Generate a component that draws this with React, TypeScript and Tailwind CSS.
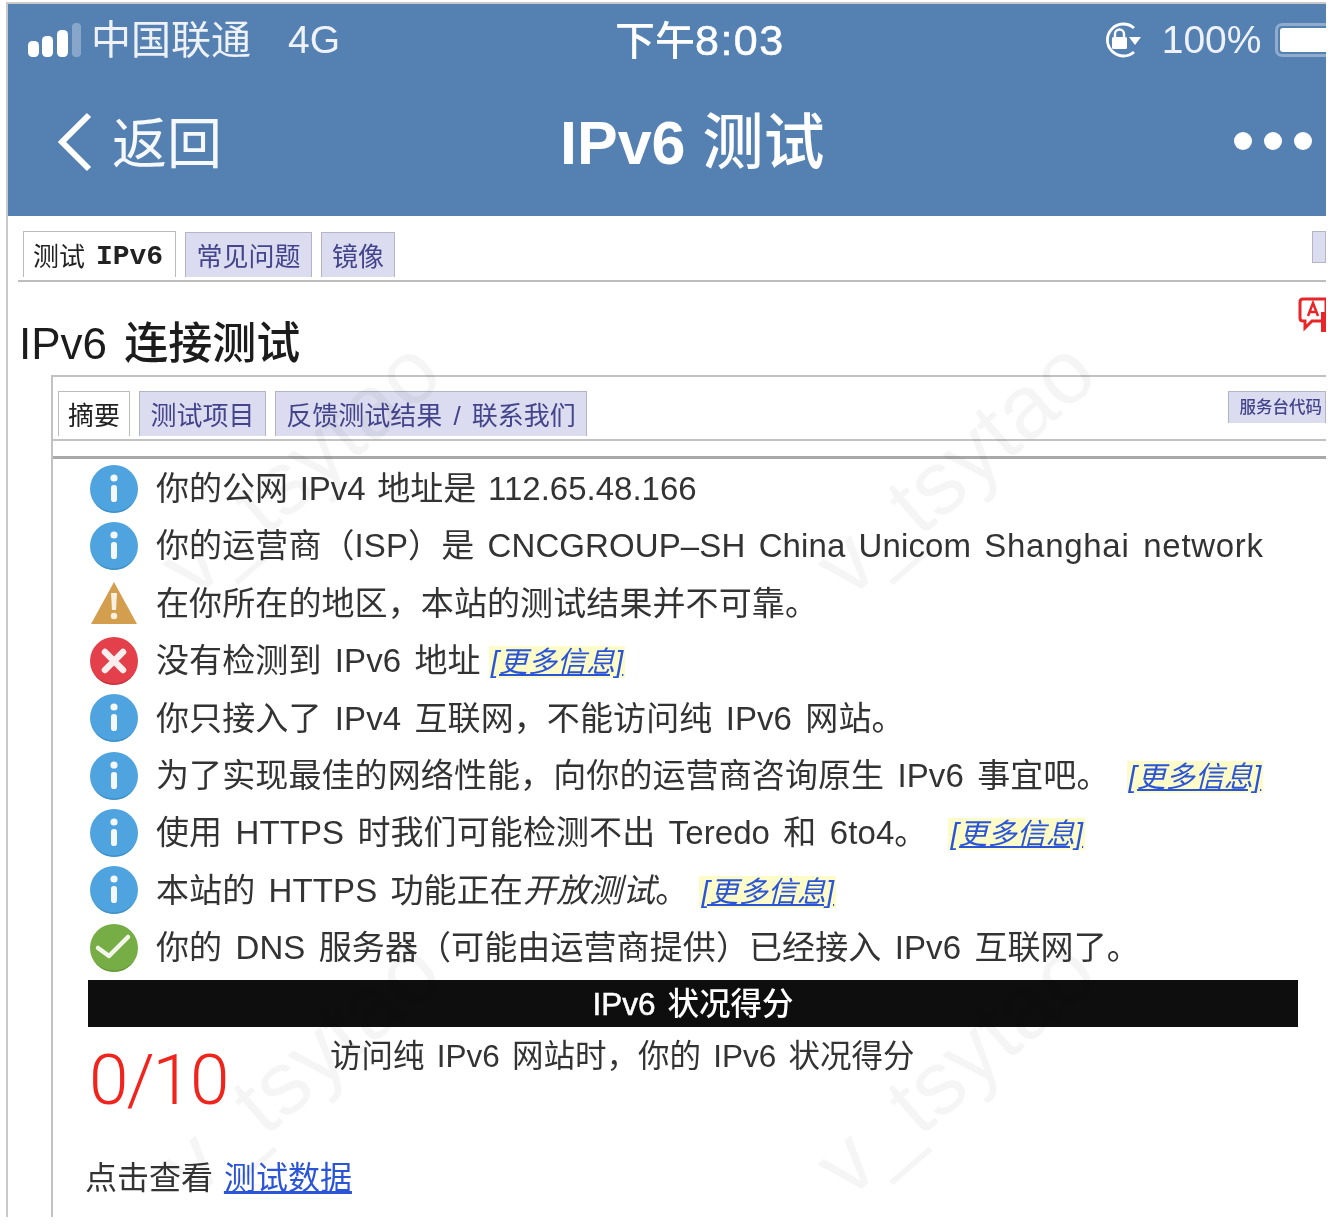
import type { ReactNode } from "react";

type Kind = "info" | "warn" | "error" | "ok";

function InfoIcon() {
  return (
    <svg width="48" height="50" viewBox="0 0 48 50">
      <circle cx="24" cy="25" r="24" fill="#4fa3de" />
      <path d="M4 38 A24 24 0 0 0 44 38 A26 26 0 0 1 4 38 Z" fill="#3f8fc8" />
      <circle cx="24" cy="14" r="3.600" fill="#f4f8fb" />
      <rect x="21" y="21" width="6" height="17" rx="2.800" fill="#f4f8fb" />
    </svg>
  );
}

function WarnIcon() {
  return (
    <svg width="48" height="44" viewBox="0 0 48 44">
      <path d="M24 1 L47 43 H1 Z" fill="#d39f4e" />
      <path d="M21 12 H27 L26 29 H22 Z" fill="#f8f0e0" />
      <circle cx="24" cy="35" r="3.200" fill="#f8f0e0" />
    </svg>
  );
}

function ErrorIcon() {
  return (
    <svg width="48" height="50" viewBox="0 0 48 50">
      <circle cx="24" cy="25" r="24" fill="#e4404b" />
      <path d="M4 38 A24 24 0 0 0 44 38 A26 26 0 0 1 4 38 Z" fill="#c8323d" />
      <path d="M15 16 L33 34 M33 16 L15 34" stroke="#fbeeee" strokeWidth="6.500" strokeLinecap="round" />
    </svg>
  );
}

function OkIcon() {
  return (
    <svg width="48" height="50" viewBox="0 0 48 50">
      <circle cx="24" cy="25" r="24" fill="#77ad45" />
      <path d="M4 38 A24 24 0 0 0 44 38 A26 26 0 0 1 4 38 Z" fill="#66993a" />
      <path d="M8 25 L19 33 L38 14" fill="none" stroke="#f3f7ea" strokeWidth="4.500" strokeLinecap="round" strokeLinejoin="round" />
    </svg>
  );
}

function StatusIcon({ kind }: { kind: Kind }) {
  if (kind === "warn") return <WarnIcon />;
  if (kind === "error") return <ErrorIcon />;
  if (kind === "ok") return <OkIcon />;
  return <InfoIcon />;
}

function More({ className }: { className: string }) {
  return (
    <span className={`bg-[#fdfbc8] px-[2px] text-[29px] italic text-[#2b55d8] underline ${className}`}>
      [更多信息]
    </span>
  );
}

function Row({ kind, children }: { kind: Kind; children: ReactNode }) {
  return (
    <div className="flex h-[57.4px] items-center">
      <div className="flex w-[48px] shrink-0 justify-center">
        <StatusIcon kind={kind} />
      </div>
      <div className="ml-[18px] whitespace-pre text-[33px] tracking-[0.1px] text-[#333] [word-spacing:4px] [text-spacing-trim:space-all]">
        {children}
      </div>
    </div>
  );
}

function Tab({ active, className, children }: { active?: boolean; className: string; children: ReactNode }) {
  return (
    <div
      className={
        active
          ? `flex items-center justify-center border border-b-0 border-[#bbb] bg-white text-[#222] ${className}`
          : `flex items-center justify-center border border-b-0 border-[#b4b4c8] bg-[#dcdcf0] text-[#44448c] ${className}`
      }
    >
      {children}
    </div>
  );
}

function Watermark({ className }: { className: string }) {
  return (
    <div
      className={`pointer-events-none absolute origin-left -rotate-[41deg] whitespace-nowrap text-[90px] leading-none text-black/[0.04] ${className}`}
    >
      v_tsytao
    </div>
  );
}

export default function App() {
  return (
    <div className="relative h-[1232px] w-[1334px] overflow-hidden bg-white [font-family:'Liberation_Sans','Noto_Sans_CJK_SC',sans-serif] [text-spacing-trim:space-all] blur-[0.7px]">
      <div className="ml-[6px] mr-[8px] mt-[2px] h-[1215px] overflow-hidden border-l-2 border-t-2 border-[#c9c9c9]">
        <header className="h-[212px] overflow-hidden bg-[#5580b2] text-white">
          <div className="flex h-[72px] items-center whitespace-nowrap pl-[20px]">
            <svg width="54" height="34" viewBox="0 0 54 34" className="shrink-0">
              <rect x="0" y="18" width="11" height="16" rx="4.500" fill="#fff" />
              <rect x="14" y="13" width="11" height="21" rx="4.500" fill="#fff" />
              <rect x="29" y="7" width="11" height="27" rx="4.500" fill="#fff" />
              <rect x="44" y="0" width="9" height="34" rx="4" fill="#fff" fillOpacity="0.3" />
            </svg>
            <span className="ml-[9px] w-[197px] shrink-0 text-[40px] text-white/90">中国联通</span>
            <span className="w-[327px] shrink-0 text-[39px] text-white/90">4G</span>
            <span className="shrink-0 text-[40px] font-medium">
              下午<span className="text-[43px] tracking-[1.500px] [-webkit-text-stroke:0.6px_#fff]">8:03</span>
            </span>
            <svg width="40" height="36" viewBox="0 0 40 36" className="ml-[317px] shrink-0">
              <path d="M32 6 A16 16 0 1 0 32 30" fill="none" stroke="#fff" strokeWidth="2.800" />
              <path d="M27 15 L39 15 L33 23 Z" fill="#fff" />
              <rect x="10" y="15" width="15" height="12" rx="1.500" fill="#fff" />
              <path d="M13 15 V12 A4.500 4.500 0 0 1 22 12 V15" fill="none" stroke="#fff" strokeWidth="2.400" />
            </svg>
            <span className="ml-[20px] shrink-0 text-[39px] text-white/90">100%</span>
            <div className="ml-[14px] flex h-[34px] w-[70px] shrink-0 items-center rounded-[7px] border-[3px] border-white/35 p-[2px]">
              <div className="h-full w-full rounded-[3px] bg-white" />
            </div>
          </div>
          <div className="flex h-[136px] items-center pl-[48px]">
            <svg width="40" height="60" viewBox="0 0 40 60" className="mb-[5px] shrink-0">
              <path d="M33 3 L6 30 L33 57" fill="none" stroke="#fff" strokeWidth="6" />
            </svg>
            <span className="ml-[16px] w-[448px] shrink-0 text-[55px] text-white/95">返回</span>
            <span className="shrink-0 text-[61px] font-bold">
              IPv6 <span className="font-medium">测试</span>
            </span>
            <div className="mb-[6px] ml-[410px] flex shrink-0 gap-[12px]">
              <div className="size-[18px] rounded-full bg-white" />
              <div className="size-[18px] rounded-full bg-white" />
              <div className="size-[18px] rounded-full bg-white" />
            </div>
          </div>
        </header>

        <main className="relative">
          <Watermark className="left-[165px] top-[316px]" />
          <Watermark className="left-[820px] top-[316px]" />
          <Watermark className="left-[165px] top-[916px]" />
          <Watermark className="left-[820px] top-[916px]" />

          <div className="ml-[10px] flex h-[66px] items-end gap-[9px] border-b-2 border-[#bdbdbd] pb-[3px] text-[26px]">
            <Tab active className="ml-[5px] h-[46px] w-[153px] pr-[3px] pt-[5px]">
              测试 <span className="ml-[11px] [font-family:'Liberation_Mono'] text-[28px] font-bold">IPv6</span>
            </Tab>
            <Tab className="h-[45px] w-[127px] pt-[5px]">常见问题</Tab>
            <Tab className="h-[45px] w-[74px] pt-[5px]">镜像</Tab>
            <div className="mb-[14px] ml-auto h-[32px] w-[14px] border border-[#b4b4c8] bg-[#dcdcf0]" />
          </div>

          <div className="flex h-[93px] items-start justify-between pl-[11px]">
            <h1 className="mt-[34px] text-[44px] leading-[56px] text-[#1c1c1c] [word-spacing:5px]">
              IPv6 <span className="font-medium">连接测试</span>
            </h1>
            <svg width="28" height="38" viewBox="0 0 28 38" className="mt-[15px] shrink-0">
              <path d="M5 2 H28 V24 H14 L7 31 V24 H5 Q2 24 2 21 V5 Q2 2 5 2 Z" fill="none" stroke="#e8262a" strokeWidth="3" />
              <path d="M10 19 L15 6 L20 19 M12 15 H18" fill="none" stroke="#e8262a" strokeWidth="2.500" />
              <rect x="23" y="15" width="5" height="20" fill="#e8262a" />
            </svg>
          </div>

          <section className="ml-[43px] h-[842px] border-l-2 border-t-2 border-[#c2c2c2]">
            <div className="flex h-[64px] items-end gap-[9px] border-b-2 border-[#c2c2c2] pb-[3px] pl-[5px] text-[26px] [word-spacing:4px]">
              <Tab active className="h-[45px] w-[72px] pt-[5px]">摘要</Tab>
              <Tab className="h-[45px] w-[127px] pt-[5px]">测试项目</Tab>
              <Tab className="h-[45px] w-[312px] pt-[5px]">反馈测试结果 / 联系我们</Tab>
              <Tab className="mb-[13px] ml-auto h-[32px] w-[98px] justify-end border-b pr-[3px] text-[16.500px] font-medium">服务台代码</Tab>
            </div>
            <div className="h-[18px] border-b-[3px] border-[#a9a9a9]" />

            <div className="pl-[37px] pr-[28px]">
              <div className="flex flex-col pt-[1px]">
                <Row kind="info">
                  <span className="tracking-normal [word-spacing:2.500px]">你的公网 IPv4 地址是 112.65.48.166</span>
                </Row>
                <Row kind="info">
                  你的运营商（ISP）是 CNCGROUP–SH China Unicom <span className="tracking-[0.7px]">Shanghai network</span>
                </Row>
                <Row kind="warn">在你所在的地区，本站的测试结果并不可靠。</Row>
                <Row kind="error">
                  没有检测到 IPv6 地址<More className="ml-[8px]" />
                </Row>
                <Row kind="info">你只接入了 IPv4 互联网，不能访问纯 IPv6 网站。</Row>
                <Row kind="info">
                  为了实现最佳的网络性能，向你的运营商咨询原生 IPv6 事宜吧。<More className="ml-[17px]" />
                </Row>
                <Row kind="info">
                  使用 HTTPS 时我们可能检测不出 Teredo 和 6to4。<More className="ml-[21px]" />
                </Row>
                <Row kind="info">
                  本站的 HTTPS 功能正在<i>开放测试</i>。<More className="ml-[11px]" />
                </Row>
                <Row kind="ok">你的 DNS 服务器（可能由运营商提供）已经接入 IPv6 互联网了。</Row>
              </div>
              <div className="-ml-[2px] mt-[3px] flex h-[47px] items-center justify-center bg-[#0e0e0e] pt-[3px] text-[31.500px] font-medium text-white [word-spacing:3px]">
                <span>
                  <span className="[-webkit-text-stroke:0.5px_#fff]">IPv6</span> 状况得分
                </span>
              </div>
              <div className="flex">
                <div className="-ml-[1px] w-[241px] pt-[13px] [font-family:'Roboto','Liberation_Sans',sans-serif] text-[71px] font-light leading-[80px] tracking-[-2px] text-[#f0241c]">0/10</div>
                <div className="pt-[8px] text-[31.500px] leading-[42px] text-[#333] [word-spacing:3.500px]">访问纯 IPv6 网站时，你的 IPv6 状况得分</div>
              </div>
              <div className="-ml-[5px] mt-[36px] text-[32px] leading-[44px] text-[#333]">
                点击查看 <span className="ml-[2px] text-[#2b55d8] underline">测试数据</span>
              </div>
            </div>
          </section>
        </main>
      </div>
    </div>
  );
}
